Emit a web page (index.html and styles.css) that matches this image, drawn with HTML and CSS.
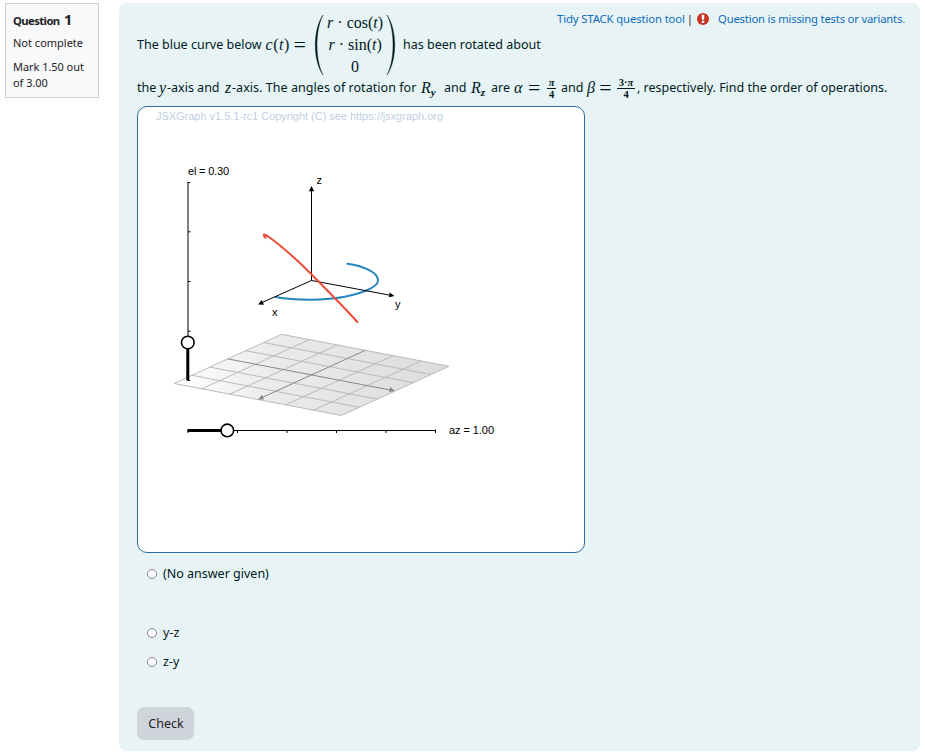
FILE: index.html
```html
<!DOCTYPE html>
<html lang="en">
<head>
<meta charset="utf-8">
<title>Question 1</title>
<link rel="stylesheet" href="styles.css">
</head>
<body>
<div class="question">
  <aside class="info">
    <h3 class="info-title">Question <span class="number">1</span></h3>
    <div class="state">Not complete</div>
    <div class="grade">Mark 1.50 out<br>of 3.00</div>
  </aside>
  <main class="content">
    <div class="tools"><a class="tidy">Tidy STACK question tool</a><span class="bar">|</span>
      <svg class="warn" width="12" height="12" viewBox="0 0 12 12"><circle cx="6" cy="6" r="6" fill="#ca3120"/><path d="M4.6 1.8h2.8l-.3 5H4.9zM4.8 7.8h2.4v2.2H4.8z" fill="#fff"/></svg>
      <a class="missing">Question is missing tests or variants.</a></div>
    <div class="line first">
      <span class="s1">The blue curve below</span>
      <span class="math ct"><i>c</i>(<i>t</i>)</span><span class="math eq">=</span>
      <span class="matrix">
        <svg width="12" height="62" viewBox="0 0 12 62"><path class="delim" d="M10 1C-.3 16-.3 46 10 61C2 46 2 16 10 1Z"/></svg>
        <span class="rows math"><span><i>r</i> · cos(<i>t</i>)</span><span><i>r</i> · sin(<i>t</i>)</span><span>0</span></span>
        <svg width="12" height="62" viewBox="0 0 12 62"><path class="delim" d="M2 1C12.3 16 12.3 46 2 61C10 46 10 16 2 1Z"/></svg>
      </span>
      <span class="s2">has been rotated about</span>
    </div>
    <div class="line second">
      <span>the</span><span class="math"><i>y</i></span><span>-axis and</span><span class="math"><i>z</i></span><span class="long">-axis. The angles of rotation for</span><span class="math"><i>R</i><sub><i>y</i></sub></span><span>and</span><span class="math"><i>R</i><sub><i>z</i></sub></span><span>are</span><span class="math"><i>α</i></span><span class="math eq">=</span><span class="frac narrow"><i>π</i><span>4</span></span><span>and</span><span class="math"><i>β</i></span><span class="math eq">=</span><span class="frac wide"><span>3·<i>π</i></span><span>4</span></span><span>, respectively. Find the order of operations.</span>
    </div>
    <div class="board">
      <svg width="446" height="445" viewBox="138 107 446 445">
        <defs>
          <linearGradient id="plane" x1="0" x2="1" y1="0" y2="0"><stop offset="0" stop-color="#fff"/><stop offset=".35" stop-color="#ebebeb"/><stop offset="1" stop-color="#dcdcdc"/></linearGradient>
        </defs>
        <text class="copy" x="156" y="120" textLength="287">JSXGraph v1.5.1-rc1 Copyright (C) see https://jsxgraph.org</text>
        <path d="M174 383.5 281.5 334.3 449 366.3 341.5 415.5Z" fill="url(#plane)"/>
        <g class="grid">
          <path d="M174 383.5 281.5 334.3 449 366.3 341.5 415.5Z"/>
          <path d="M201.9 388.8 309.4 339.6M229.8 394.2 337.3 345M285.7 404.8 393.2 355.6M313.6 410.2 421.1 361"/>
          <path d="M191.9 375.3 359.4 407.3M209.8 367.1 377.3 399.1M245.7 350.7 413.2 382.7M263.6 342.5 431.1 374.5"/>
        </g>
        <path class="floor-axis" d="M365.3 350.3 260 398.5M227.8 358.9 393 390.5"/>
        <path d="M258 399.5 262 394.8 264 399.4ZM395 390.9 390.2 387 389 392Z" fill="#858585"/>
        <path class="curve blue" d="M275.5 297C294 300.2 324 301 346 296.5C366 292.5 379 286 378 279.5C377 272 363 266 347.5 263.8"/>
        <path class="thin" d="M311.5 280.5V189M311.5 280.5 262 302.5M311.5 280.5 390 295.2"/>
        <path d="M311.5 186 308.8 191.3H314.2ZM258 304.5 261.8 300 264 304.7ZM394.5 296 389.7 292.5 388.8 297.2Z"/>
        <path class="curve red" d="M265.5 237.8C262.5 234.8 263.5 233.3 267.5 236C286 249 309 271.5 322 285C334 297.5 347 310 357.3 322"/>
        <text x="316.5" y="184">z</text><text x="272" y="316">x</text><text x="395" y="308">y</text>
        <text x="188" y="175" textLength="41">el = 0.30</text>
        <text x="449" y="434" textLength="45">az = 1.00</text>
        <path class="thin" d="M188 381V182M187.5 182.5H190M188 231.8H190.5M188 281.5H190.5M188 331.2H190.5M188 430.5H436M188 430V433M237.5 430V433M287 430V433M336.5 430V433M386 430V433M435.5 429.5V433"/>
        <path class="thick" d="M187.8 342V380.5M187.5 430.5H227.5"/><path class="thin" d="M188 380.5H190"/>
        <circle class="knob" cx="187.8" cy="342.5" r="6.3"/><circle class="knob" cx="227.3" cy="430.4" r="6.3"/>
      </svg>
    </div>
    <div class="answers">
      <label class="option none"><input type="radio" name="order"><span>(No answer given)</span></label>
      <label class="option"><input type="radio" name="order"><span>y-z</span></label>
      <label class="option"><input type="radio" name="order"><span>z-y</span></label>
    </div>
    <button class="check">Check</button>
  </main>
</div>
</body>
</html>
```
FILE: styles.css
```css
*{box-sizing:border-box}
body{margin:0;background:#fff;color:#1d2125;font:12.5px/16px "Noto Sans",sans-serif}
.question{display:flex;align-items:flex-start;padding:3px 5px}
.info{width:94px;height:95px;border:1px solid #cad0d7;background:#f8f9fa;padding:7px 7px;font-size:11px;line-height:16px;white-space:nowrap}
.info-title{margin:0;font-size:11.3px;font-weight:700;line-height:17px;letter-spacing:-.6px;word-spacing:2px}
.number{font-size:14.5px}
.state{margin-top:6px}
.grade{margin-top:8px;letter-spacing:-.05px}
.content{width:801px;height:748px;margin-left:20px;padding:0 18px;border-radius:8px;background:#e7f3f5;color:#001a1e;white-space:nowrap}
.tools{height:32px;display:flex;align-items:center;margin-right:-3px;justify-content:flex-end;font-size:11.3px;color:#0f6cbf}
.tidy{letter-spacing:-.12px}
.missing{letter-spacing:-.21px}
.bar{margin:0 4px 0 2px;color:#333}
.warn{margin-right:9px;margin-top:-1px}
.line{display:flex;align-items:center}
.first{height:60px;margin-top:-20px}
.math{font-family:"Liberation Serif",serif;font-size:16px}
.ct{margin-left:4px;letter-spacing:.5px}
.eq{font-size:20px;transform:scaleX(1.1)}
.ct+.eq{margin:0 8px 0 4px}
.matrix{display:flex;align-items:center;height:62px}
.delim{fill:#001a1e;stroke:#001a1e;stroke-width:.4}
.rows{display:flex;flex-direction:column;align-items:center;line-height:22px;width:60px}
.s2{margin-left:6px}
.second{display:grid;grid-template-columns:22px 8px 58px 7px 189px 23px 27px 20px 23px 15px 18px 14px 26px 13px 17px 20px 251px;height:24px;margin-top:1px}
.long{letter-spacing:.05px}
sub{font-size:11px;line-height:0;vertical-align:-3px;font-weight:bold}
.frac{display:flex;flex-direction:column;align-items:center;font:bold 10.5px/11px "Liberation Serif",serif}
.narrow{width:9px}
.wide{width:18px}
.frac>:last-child{border-top:1px solid #001a1e;align-self:stretch;text-align:center}
.board{width:448px;height:447px;margin-top:6px;border:1px solid #2d6ca2;border-radius:10px;background:#fff;overflow:hidden}
.board svg{display:block}
text{font:11px "Liberation Sans",sans-serif;fill:#000}
.copy{font-size:11px;fill:#c0d0e2}
.grid{fill:none;stroke:#bababa;stroke-width:1}
.floor-axis{fill:none;stroke:#888;stroke-width:1}
.curve{fill:none;stroke-width:2;stroke-linecap:round}
.blue{stroke:#2487bd}
.red{stroke:#ef4a37}
.thin{fill:none;stroke:#000;stroke-width:1}
.thick{fill:none;stroke:#000;stroke-width:3}
.knob{fill:#fff;stroke:#000;stroke-width:1.6}
.answers{padding:11px 0 0 10px}
.option{display:flex;align-items:center;height:20px;margin-bottom:9px}
.option input{appearance:none;width:10px;height:10px;margin:0 6px 0 0;border:1px solid #85858f;border-radius:50%;background:#fff}
.none{margin-bottom:39px}
.check{display:block;width:57px;height:33px;margin-top:35px;padding:1px 0 0 1px;border:0;border-radius:7px;background:#ced4da;color:#1d2125;font:12.5px/32px "Noto Sans",sans-serif}
```
